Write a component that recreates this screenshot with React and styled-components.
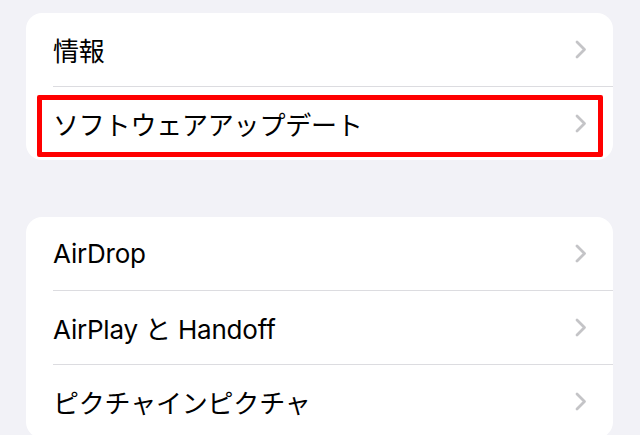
import React from "react";
import styled, { createGlobalStyle } from "styled-components";

const GlobalStyle = createGlobalStyle`
  html, body {
    margin: 0;
    padding: 0;
    background: #f2f2f7;
  }
  body {
    font-family: Inter, "Noto Sans CJK JP", sans-serif;
    -webkit-font-smoothing: antialiased;
  }
`;

const Page = styled.div`
  width: 640px;
  height: 435px;
  overflow: hidden;
  box-sizing: border-box;
  padding: 13px 27px 0 26px;
  display: flex;
  flex-direction: column;
  gap: 57px;
`;

const Card = styled.div`
  background: #ffffff;
  border-radius: 16px;
  overflow: hidden;
  flex-shrink: 0;
`;

const Row = styled.div`
  position: relative;
  padding-left: 27px;
`;

const RowInner = styled.div`
  height: 73px;
  display: flex;
  align-items: center;
  justify-content: space-between;
  padding-right: 26px;
  border-top: ${(p) => (p.$first ? "none" : "1px solid #dcdce0")};
`;

const Label = styled.span`
  font-size: 26px;
  color: #000000;
  letter-spacing: -0.2px;
`;

const Highlight = styled.div`
  position: absolute;
  top: 9px;
  bottom: 3px;
  left: 11px;
  right: 10px;
  border: 5px solid #ff0000;
  border-radius: 2px;
  pointer-events: none;
`;

const Chevron = () => (
  <svg width="12" height="19" viewBox="0 0 12 19">
    <path
      d="M2 2 L9.5 9.5 L2 17"
      fill="none"
      stroke="#c4c4c7"
      strokeWidth="2.8"
      strokeLinecap="round"
      strokeLinejoin="round"
    />
  </svg>
);

const groups = [
  [
    { label: "情報" },
    { label: "ソフトウェアアップデート", marked: true },
  ],
  [
    { label: "AirDrop" },
    { label: "AirPlay と Handoff" },
    { label: "ピクチャインピクチャ" },
  ],
];

const App = () => (
  <>
    <GlobalStyle />
    <Page>
      {groups.map((items, gi) => (
        <Card key={gi}>
          {items.map((item, i) => (
            <Row key={item.label}>
              <RowInner $first={i === 0}>
                <Label>{item.label}</Label>
                <Chevron />
              </RowInner>
              {item.marked && <Highlight />}
            </Row>
          ))}
        </Card>
      ))}
    </Page>
  </>
);

export default App;
